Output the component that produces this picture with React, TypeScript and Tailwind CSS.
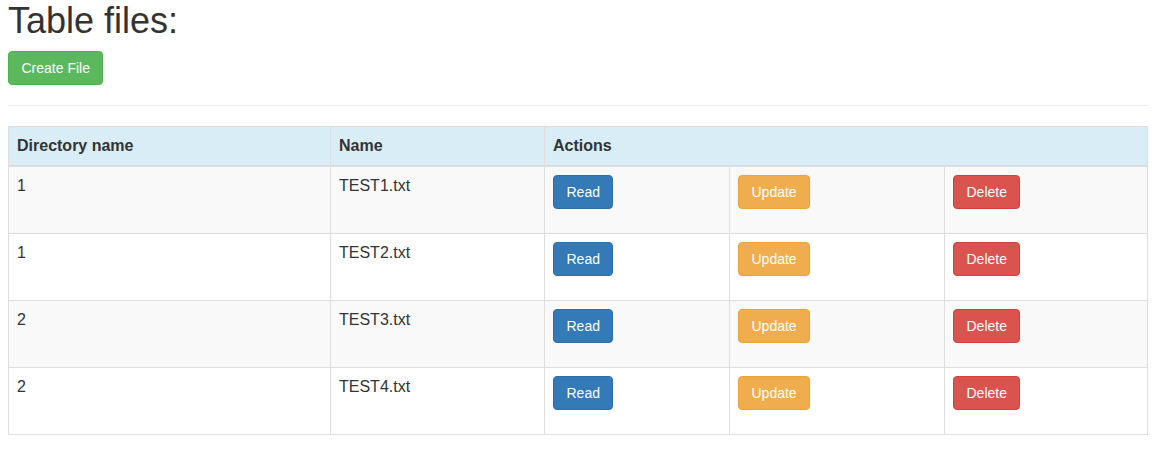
const files = [
  { dir: "1", name: "TEST1.txt" },
  { dir: "1", name: "TEST2.txt" },
  { dir: "2", name: "TEST3.txt" },
  { dir: "2", name: "TEST4.txt" },
];

const btn =
  "inline-block rounded-[4px] border px-[12.5px] py-[6px] text-[14px] leading-[20px] text-white";

export default function App() {
  return (
    <div className="px-2 pt-px font-['Liberation_Sans',Arial,sans-serif] text-[16px] leading-[1.42857] text-[#333]">
      <h1 className="mb-[10px] text-[36px] leading-[1.1]">Table files:</h1>
      <button className={`${btn} border-[#4cae4c] bg-[#5cb85c]`}>Create File</button>
      <hr className="mt-5 mb-5 border-t border-[#eee]" />

      <table className="w-full table-fixed border-collapse border border-[#ddd]">
        <colgroup>
          <col className="w-[322px]" />
          <col className="w-[214px]" />
          <col className="w-[185px]" />
          <col className="w-[215px]" />
          <col />
        </colgroup>
        <thead>
          <tr className="bg-[#d9edf7]">
            <th className="border border-b-2 border-[#ddd] p-2 text-left font-bold">Directory name</th>
            <th className="border border-b-2 border-[#ddd] p-2 text-left font-bold">Name</th>
            <th colSpan={3} className="border border-b-2 border-[#ddd] p-2 text-left font-bold">
              Actions
            </th>
          </tr>
        </thead>
        <tbody>
          {files.map((f, i) => (
            <tr key={f.name} className={`h-[67px] ${i % 2 === 0 ? "bg-[#f9f9f9]" : "bg-white"}`}>
              <td className="border border-[#ddd] p-2 align-top">{f.dir}</td>
              <td className="border border-[#ddd] p-2 align-top">{f.name}</td>
              <td className="border border-[#ddd] p-2 align-top">
                <button className={`${btn} border-[#2e6da4] bg-[#337ab7]`}>Read</button>
              </td>
              <td className="border border-[#ddd] p-2 align-top">
                <button className={`${btn} border-[#eea236] bg-[#f0ad4e]`}>Update</button>
              </td>
              <td className="border border-[#ddd] p-2 align-top">
                <button className={`${btn} border-[#d43f3a] bg-[#d9534f]`}>Delete</button>
              </td>
            </tr>
          ))}
        </tbody>
      </table>
    </div>
  );
}
